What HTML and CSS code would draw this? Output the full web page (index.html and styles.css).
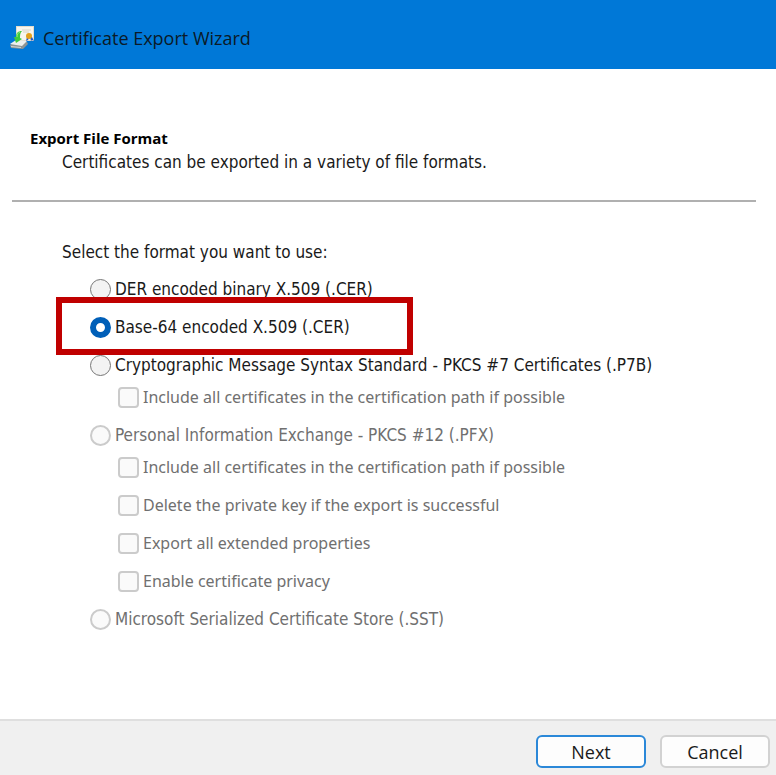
FILE: index.html
```html
<!DOCTYPE html>
<html lang="en">
<head>
<meta charset="utf-8">
<meta name="viewport" content="width=device-width, initial-scale=1">
<title>Certificate Export Wizard</title>
<link rel="stylesheet" href="styles.css">
</head>
<body>
<header class="titlebar">
  <svg class="titlebar-icon" viewBox="0 0 26 26" aria-hidden="true">
    <path d="M7 1h18v15H7z" fill="#e3dccb"/>
    <path d="M8 2h16v13H8z" fill="#f7f5ee"/>
    <path d="M13 5h9M14 7h6" stroke="#d8d4c8"/>
    <path d="M18 12l-1 4 2-1 1-2zM21 12l1 4 1-1 2 1-2-4z" fill="#2459c4"/>
    <circle cx="20" cy="11" r="3" fill="#e4a11c"/>
    <path d="M1 20l6-4 11 1 1 2-5 5-12-1z" fill="#8e9494"/>
    <path d="M1 19l6-4 11 1-5 5z" fill="#eef0ee"/>
    <path d="M2 21l10 1v1L2 22z" fill="#d3d7d5"/>
    <path d="M13 6c-4 0-6 2-6 6H5l2 6 6-4-2-1c0-3 0-5 2-7z" fill="#3fc93f"/>
    <path d="M8 12c0-3 1-4 3-5" stroke="#92ec80" fill="none"/>
  </svg>
  <h1 class="titlebar-text">Certificate Export Wizard</h1>
</header>

<main class="page">
  <section class="intro">
    <h2 class="intro-title">Export File Format</h2>
    <p class="intro-text">Certificates can be exported in a variety of file formats.</p>
  </section>

  <form class="formats" id="formats">
    <p class="formats-label" id="formats-label">Select the format you want to use:</p>
    <div class="options" role="radiogroup" aria-labelledby="formats-label">
      <label class="option"><input class="radio" type="radio" name="format"><span>DER encoded binary X.509 (.CER)</span></label>
      <label class="option highlighted"><input class="radio" type="radio" name="format" checked><span>Base-64 encoded X.509 (.CER)</span></label>
      <div class="group">
        <label class="option"><input class="radio" type="radio" name="format"><span>Cryptographic Message Syntax Standard - PKCS #7 Certificates (.P7B)</span></label>
        <div class="suboptions">
          <label class="option disabled"><input class="check" type="checkbox" disabled><span>Include all certificates in the certification path if possible</span></label>
        </div>
      </div>
      <div class="group">
        <label class="option disabled"><input class="radio" type="radio" name="format" disabled><span>Personal Information Exchange - PKCS #12 (.PFX)</span></label>
        <div class="suboptions">
          <label class="option disabled"><input class="check" type="checkbox" disabled><span>Include all certificates in the certification path if possible</span></label>
          <label class="option disabled"><input class="check" type="checkbox" disabled><span>Delete the private key if the export is successful</span></label>
          <label class="option disabled"><input class="check" type="checkbox" disabled><span>Export all extended properties</span></label>
          <label class="option disabled"><input class="check" type="checkbox" disabled><span>Enable certificate privacy</span></label>
        </div>
      </div>
      <label class="option disabled"><input class="radio" type="radio" name="format" disabled><span>Microsoft Serialized Certificate Store (.SST)</span></label>
    </div>
  </form>
</main>

<footer class="actions">
  <button class="button primary" type="submit" form="formats">Next</button>
  <button class="button" type="button">Cancel</button>
</footer>
</body>
</html>
```
FILE: styles.css
```css
*,
*::after {
  box-sizing: border-box;
}

body {
  margin: 0;
  min-height: 100vh;
  display: flex;
  flex-direction: column;
  background: #fff;
  color: #1a1a1a;
  font-family: "DejaVu Sans Condensed", Tahoma, sans-serif;
  font-size: 17px;
  line-height: 24px;
}

h1,
h2,
p {
  margin: 0;
}

.titlebar {
  display: flex;
  align-items: center;
  gap: 8px;
  padding: 24px 9px 17px;
  background: #0078d7;
  color: #0b1a28;
  font-family: "Open Sans", "Segoe UI", sans-serif;
}

.titlebar-icon {
  width: 26px;
  height: 26px;
}

.titlebar-text {
  font-size: 18px;
  font-weight: 400;
  line-height: 28px;
}

.page {
  flex: 1;
  padding: 57px 20px 0 12px;
}

.intro {
  padding: 0 18px 26px;
  border-bottom: 2px solid #b0b0b0;
}

.intro-title {
  color: #000;
  font-family: "Open Sans", Tahoma, sans-serif;
  font-size: 15px;
  font-weight: 700;
}

.intro-text {
  padding-left: 32px;
}

.formats {
  padding: 38px 0 24px 50px;
}

.options {
  display: flex;
  flex-direction: column;
  gap: 12px;
  padding: 12px 0 0 28px;
}

.group {
  display: flex;
  flex-direction: column;
  gap: 6px;
}

.suboptions {
  display: flex;
  flex-direction: column;
  gap: 12px;
  padding-left: 28px;
  font-family: "Noto Sans", Tahoma, sans-serif;
  font-size: 16px;
}

.option {
  display: flex;
  align-items: center;
  gap: 4px;
  min-height: 26px;
  white-space: nowrap;
}

.disabled {
  color: #707070;
}

.highlighted {
  position: relative;
}

.highlighted::after {
  content: "";
  position: absolute;
  top: -17px;
  left: -34px;
  width: 357px;
  height: 58px;
  border: 6px solid #c00000;
  pointer-events: none;
}

.radio,
.check {
  appearance: none;
  flex: none;
  width: 21px;
  height: 21px;
  margin: 0;
  border: 1px solid #767676;
  background: #f3f3f3;
}

.radio {
  border-radius: 50%;
}

.radio:checked {
  border: 6px solid #005fb8;
  background: #fff;
}

.check {
  border-width: 2px;
  border-radius: 4px;
}

.radio:disabled,
.check:disabled {
  border-color: #cbcbcb;
  background: #fafafa;
}

.radio:disabled {
  border-width: 2px;
}

.actions {
  display: flex;
  justify-content: flex-end;
  gap: 14px;
  padding: 14px 6px 7px;
  border-top: 2px solid #dfdfdf;
  background: #f0f0f0;
}

.button {
  width: 110px;
  height: 33px;
  padding: 0;
  border: 2px solid #d2d2d2;
  border-radius: 6px;
  background: #fdfdfd;
  color: #1a1a1a;
  font-family: "Open Sans", "Segoe UI", sans-serif;
  font-size: 18px;
  line-height: 28px;
}

.primary {
  border-color: #2b88d8;
}
```
